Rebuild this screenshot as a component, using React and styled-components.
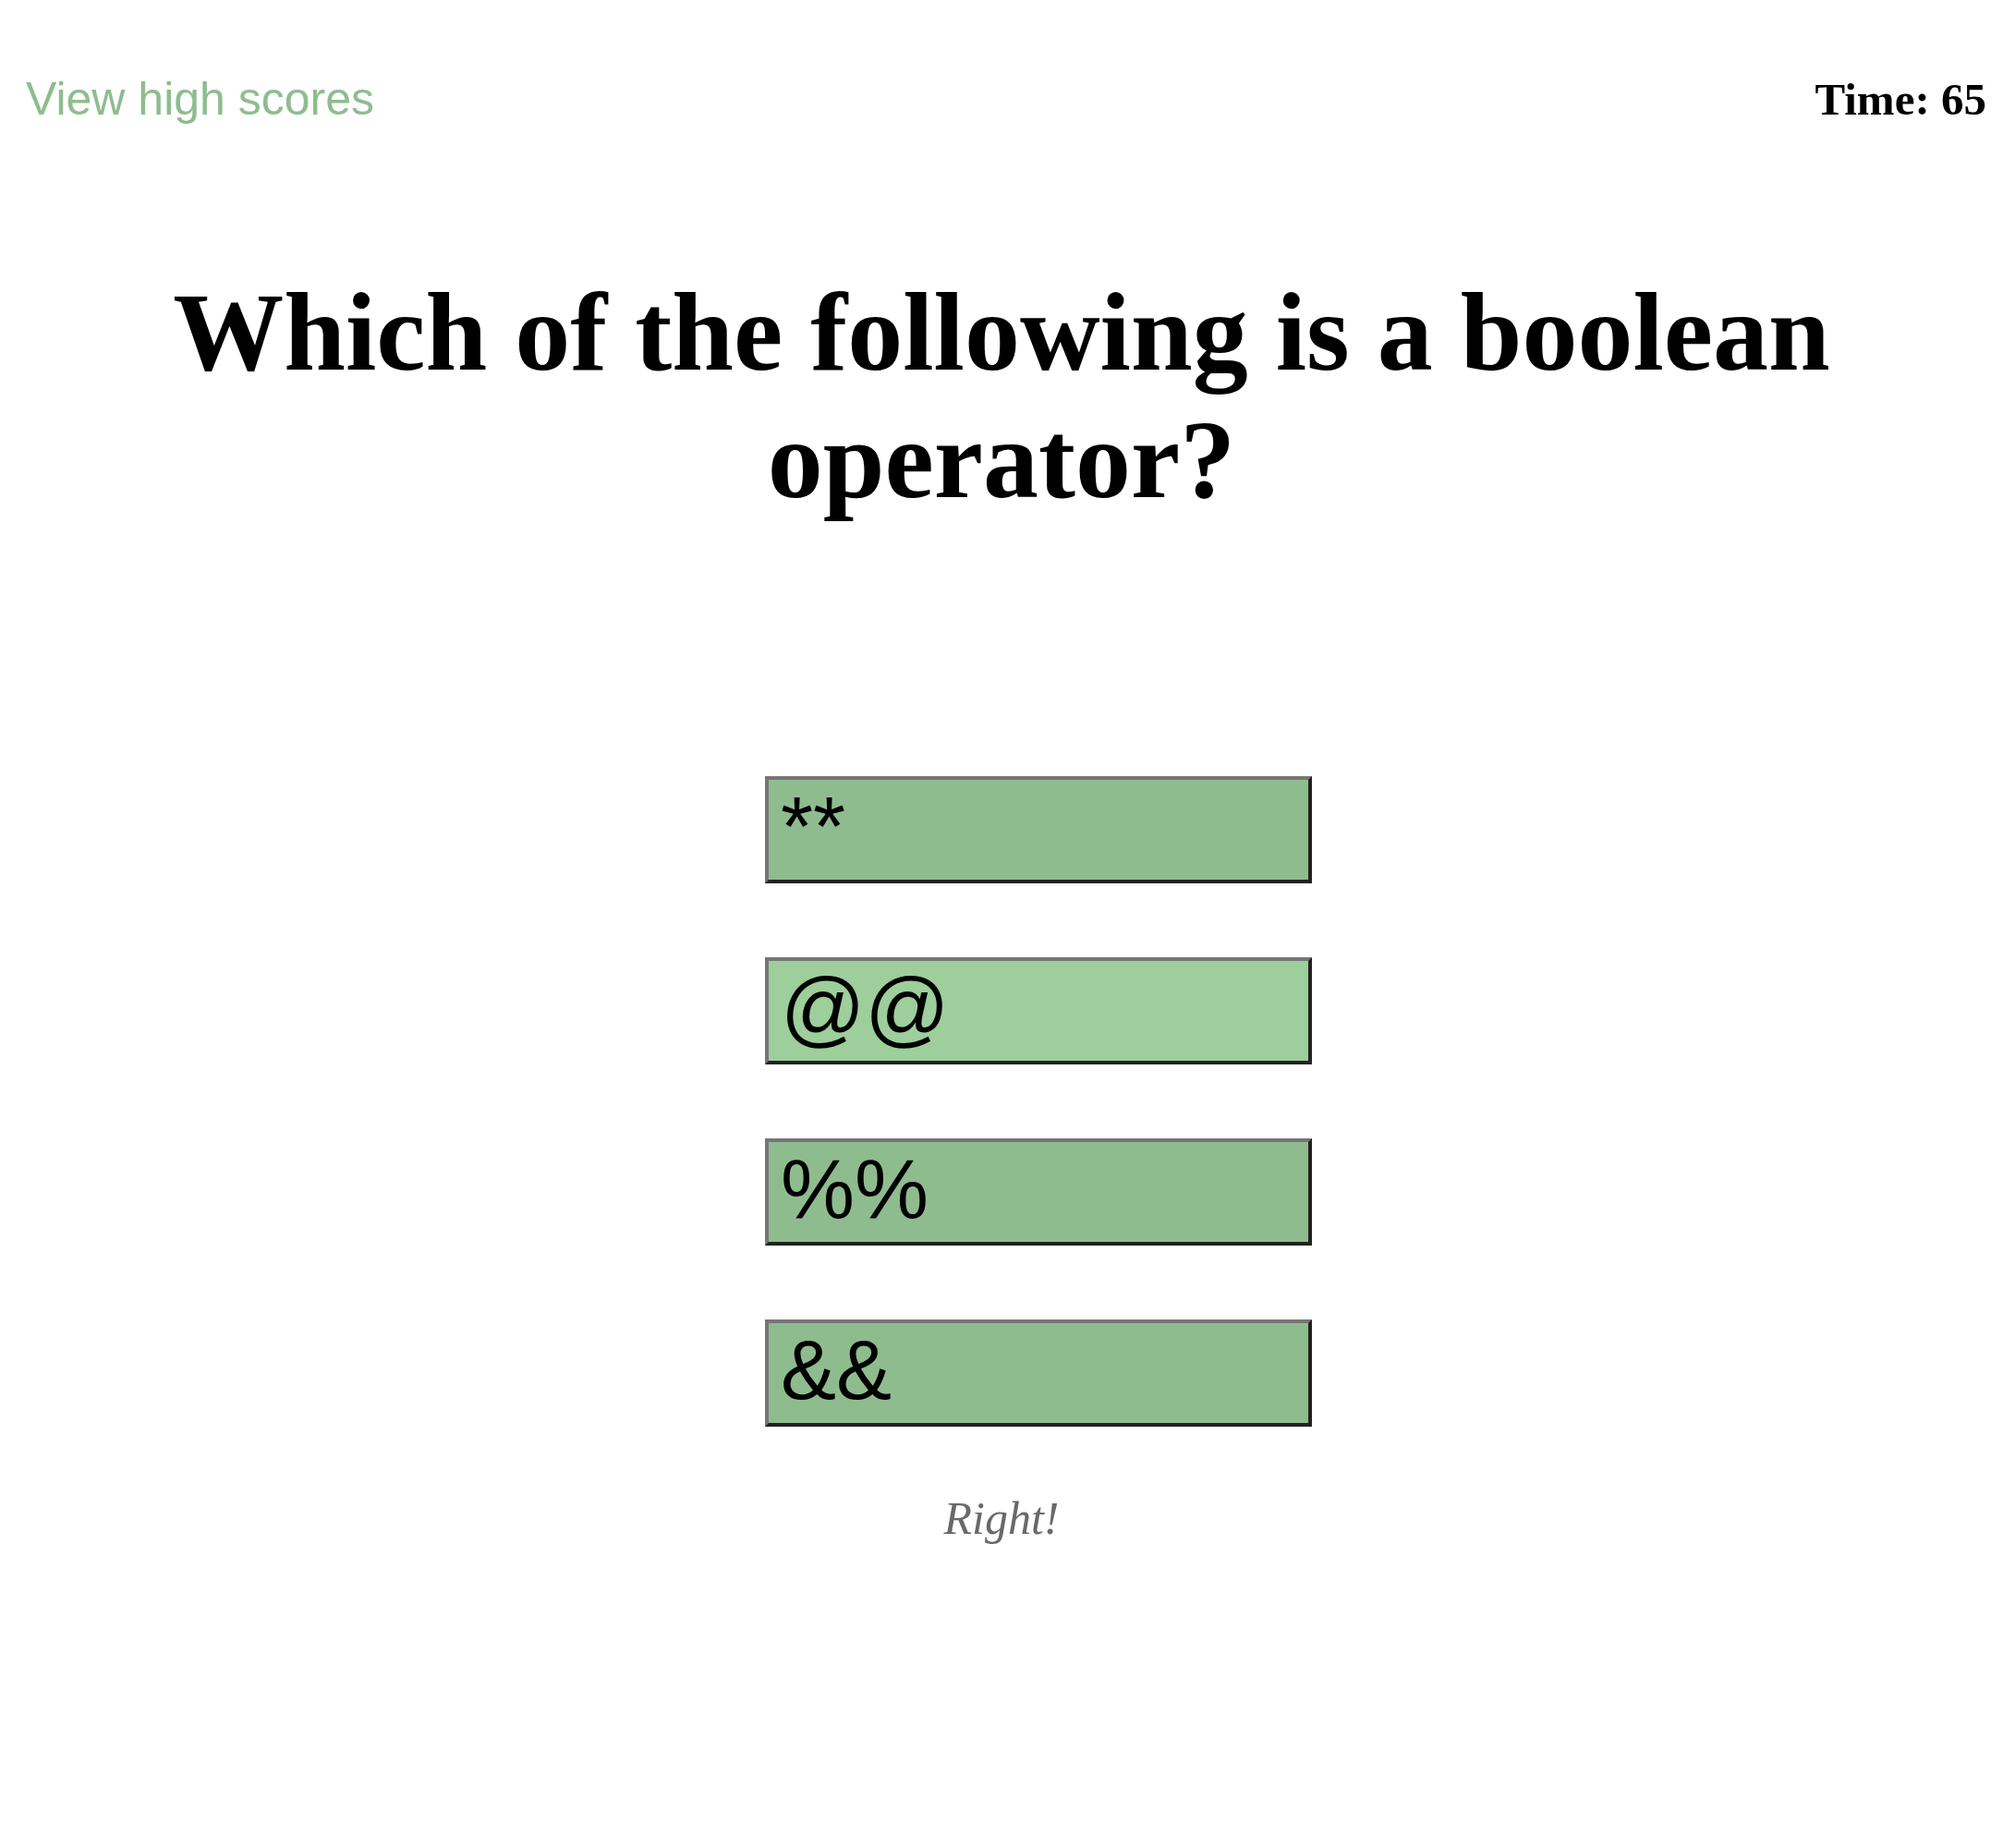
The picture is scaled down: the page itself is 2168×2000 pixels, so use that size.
import React from "react";
import styled, { createGlobalStyle } from "styled-components";

const GlobalStyle = createGlobalStyle`
  html, body {
    margin: 0;
    padding: 0;
    background: #ffffff;
  }
  body {
    font-family: "Liberation Serif", "Times New Roman", serif;
    color: #000;
  }
`;

const Page = styled.div`
  display: flex;
  flex-direction: column;
  width: 2168px;
  min-height: 2000px;
`;

const Header = styled.header`
  display: flex;
  justify-content: space-between;
  align-items: baseline;
  padding: 78px 18px 0 28px;
`;

const HighScoresLink = styled.a`
  font-family: "Liberation Sans", Arial, sans-serif;
  font-size: 50px;
  line-height: normal;
  color: #8fbc8f;
  text-decoration: none;
  cursor: pointer;
`;

const Timer = styled.div`
  font-family: "Liberation Serif", "Times New Roman", serif;
  font-weight: 700;
  font-size: 49px;
  line-height: normal;
`;

const Question = styled.h1`
  margin: 155px 0 0;
  padding: 0 150px;
  text-align: center;
  font-family: "Liberation Serif", "Times New Roman", serif;
  font-weight: 700;
  font-size: 120px;
  line-height: normal;
`;

const Choices = styled.div`
  display: flex;
  flex-direction: column;
  align-items: center;
  gap: 80px;
  margin-top: 273px;
  padding-left: 80px;
`;

const Choice = styled.button`
  display: flex;
  align-items: flex-start;
  box-sizing: border-box;
  width: 592px;
  height: 116px;
  margin: 0;
  padding: 0 11px 4px 13px;
  border-width: 4px;
  border-style: solid;
  border-color: #767676 #222222 #222222 #767676;
  background: ${(p) => (p.$hover ? "#9dce9b" : "#8fbc8f")};
  color: #000;
  font-family: "Liberation Sans", Arial, sans-serif;
  font-size: 90px;
  line-height: normal;
  text-align: left;
  cursor: pointer;
`;

const Feedback = styled.p`
  margin: 70px 0 0;
  text-align: center;
  font-family: "Liberation Serif", "Times New Roman", serif;
  font-style: italic;
  font-size: 50px;
  line-height: normal;
  color: #696969;
`;

const choices = [
  { label: "**" },
  { label: "@@", hover: true },
  { label: "%%" },
  { label: "&&" },
];

export default function App() {
  return (
    <>
      <GlobalStyle />
      <Page>
        <Header>
          <HighScoresLink>View high scores</HighScoresLink>
          <Timer>Time: 65</Timer>
        </Header>
        <Question>Which of the following is a boolean operator?</Question>
        <Choices>
          {choices.map((c) => (
            <Choice key={c.label} $hover={c.hover}>
              {c.label}
            </Choice>
          ))}
        </Choices>
        <Feedback>Right!</Feedback>
      </Page>
    </>
  );
}
